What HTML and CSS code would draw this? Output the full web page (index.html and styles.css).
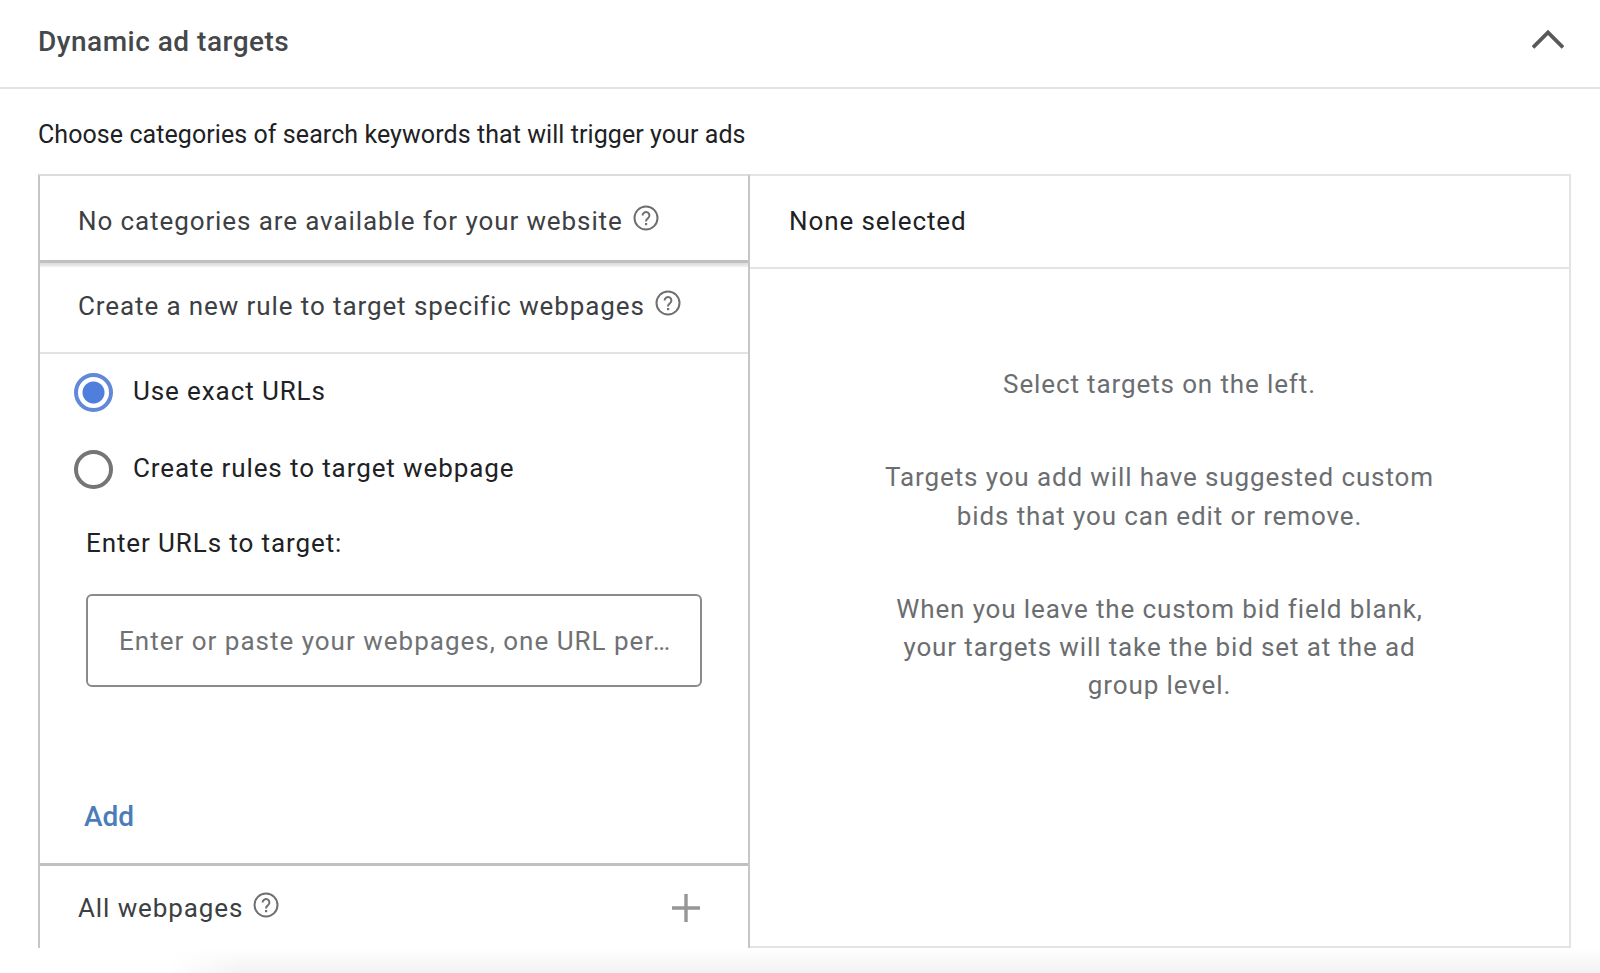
FILE: index.html
```html
<!DOCTYPE html>
<html lang="en">
<head>
<meta charset="utf-8">
<title>Dynamic ad targets</title>
<link rel="stylesheet" href="styles.css">
</head>
<body>
<main class="page">
  <header class="panel-header">
    <h1 class="panel-title">Dynamic ad targets</h1>
    <svg class="chevron" viewBox="0 0 32 20" width="32" height="20" aria-hidden="true"><path d="M1 18.5 16 3.5l15 15" fill="none" stroke="#595959" stroke-width="3.8"/></svg>
  </header>
  <p class="intro">Choose categories of search keywords that will trigger your ads</p>
  <section class="picker">
    <div class="left">
      <div class="row row-cats">
        <span class="row-text">No categories are available for your website</span>
        <svg class="help" viewBox="0 0 26 26" width="26" height="26" aria-hidden="true"><circle cx="13" cy="13" r="11.5" fill="none" stroke="#6f6f6f" stroke-width="2"/><path d="M9.6 10.4a3.4 3.4 0 1 1 5.4 2.8c-1.3 1-2 1.5-2 3.2" fill="none" stroke="#6f6f6f" stroke-width="2"/><path d="M12 18h2.2v2.2H12z" fill="#6f6f6f"/></svg>
      </div>
      <div class="row row-rule">
        <span class="row-text">Create a new rule to target specific webpages</span>
        <svg class="help" viewBox="0 0 26 26" width="26" height="26" aria-hidden="true"><circle cx="13" cy="13" r="11.5" fill="none" stroke="#6f6f6f" stroke-width="2"/><path d="M9.6 10.4a3.4 3.4 0 1 1 5.4 2.8c-1.3 1-2 1.5-2 3.2" fill="none" stroke="#6f6f6f" stroke-width="2"/><path d="M12 18h2.2v2.2H12z" fill="#6f6f6f"/></svg>
      </div>
      <div class="rule-body">
        <div class="radio-line radio-first"><span class="radio radio-on"></span><span class="radio-label">Use exact URLs</span></div>
        <div class="radio-line radio-second"><span class="radio"></span><span class="radio-label">Create rules to target webpage</span></div>
        <div class="url-label">Enter URLs to target:</div>
        <div class="url-input">Enter or paste your webpages, one URL per…</div>
        <div class="add">Add</div>
      </div>
      <div class="row row-all">
        <span class="row-text">All webpages</span>
        <svg class="help" viewBox="0 0 26 26" width="26" height="26" aria-hidden="true"><circle cx="13" cy="13" r="11.5" fill="none" stroke="#6f6f6f" stroke-width="2"/><path d="M9.6 10.4a3.4 3.4 0 1 1 5.4 2.8c-1.3 1-2 1.5-2 3.2" fill="none" stroke="#6f6f6f" stroke-width="2"/><path d="M12 18h2.2v2.2H12z" fill="#6f6f6f"/></svg>
        <svg class="plus" viewBox="0 0 28 28" width="28" height="28" aria-hidden="true"><path d="M14 0v28M0 14h28" fill="none" stroke="#969696" stroke-width="3.4"/></svg>
      </div>
    </div>
    <div class="right">
      <div class="selected">None selected</div>
      <div class="hints">
        <p class="hint">Select targets on the left.</p>
        <p class="hint">Targets you add will have suggested custom<br>bids that you can edit or remove.</p>
        <p class="hint">When you leave the custom bid field blank,<br>your targets will take the bid set at the ad<br>group level.</p>
      </div>
    </div>
  </section>
  <div class="fade"></div>
</main>
</body>
</html>
```
FILE: styles.css
```css
* { box-sizing: border-box; }
html, body { margin: 0; background: #fff; }
body { font-family: Roboto, "Liberation Sans", sans-serif; color: #202124; overflow: hidden; }
.page { width: 1600px; height: 973px; display: flex; flex-direction: column; overflow: hidden; }

.panel-header { height: 89px; flex: none; display: flex; align-items: center; justify-content: space-between; padding: 0 36px 4px 38px; border-bottom: 2px solid #e2e2e2; }
.panel-title { margin: 0; font-size: 28px; font-weight: 500; color: #45484b; letter-spacing: 0.5px; }
.chevron { display: block; margin-top: -6px; }

.intro { margin: 0; height: 85px; flex: none; padding-top: 29px; padding-left: 38px; font-size: 25px; line-height: 34px; letter-spacing: 0.07px; color: #202124; }

.picker { flex: none; height: 774px; margin: 0 29px 0 38px; display: grid; grid-template-columns: 712px 1fr; }

.left { border-left: 2px solid #c6c6c6; border-right: 2px solid #c6c6c6; border-top: 2px solid #dcdcdc; display: flex; flex-direction: column; overflow: hidden; }
.row { display: flex; align-items: center; padding-left: 38px; font-size: 26px; letter-spacing: 0.9px; color: #3c4043; }
.row-text { white-space: nowrap; }
.help { flex: none; margin-left: 10px; margin-top: -6px; }
.row-cats { height: 87px; flex: none; border-bottom: 3px solid #c0c0c0; padding-top: 5px; box-shadow: 0 2px 2px rgba(0,0,0,.08); position: relative; }
.row-rule { height: 91px; flex: none; border-top: 4px solid #efefef; border-bottom: 2px solid #e2e2e2; padding-bottom: 7px; }

.rule-body { flex: none; height: 512px; display: flex; flex-direction: column; border-bottom: 3px solid #c0c0c0; }
.radio-line { display: flex; align-items: center; height: 38px; padding-left: 34px; font-size: 26px; letter-spacing: 0.9px; color: #202124; }
.radio-first { margin-top: 19px; }
.radio-second { margin-top: 39px; }
.radio { width: 39px; height: 39px; border-radius: 50%; border: 4px solid #757575; flex: none; margin-right: 20px; background: #fff; }
.radio-on { border-color: #6189d8; background: radial-gradient(circle, #4f7edd 0 10.5px, #fff 11.5px); }
.radio-label { white-space: nowrap; margin-top: -3px; }
.url-label { margin: 38px 0 0 46px; height: 34px; font-size: 26px; line-height: 34px; letter-spacing: 0.9px; color: #202124; }
.url-input { margin: 34px 0 0 46px; width: 616px; height: 93px; border: 2px solid #8a8a8a; border-radius: 6px; padding-left: 31px; display: flex; align-items: center; font-size: 26px; letter-spacing: 1px; color: #6f7275; white-space: nowrap; }
.add { margin: 113px 0 0 44px; font-size: 28px; font-weight: 500; color: #4a7db9; }

.row-all { flex: 1; align-items: flex-start; padding-top: 27px; }
.row-all .help { margin-top: -1px; }
.plus { margin-left: auto; margin-right: 48px; margin-top: 1px; }

.right { border-top: 2px solid #e4e4e4; border-right: 2px solid #e4e4e4; border-bottom: 2px solid #e4e4e4; display: flex; flex-direction: column; }
.selected { height: 93px; flex: none; border-bottom: 2px solid #e4e4e4; padding-left: 39px; padding-bottom: 2px; display: flex; align-items: center; font-size: 26px; letter-spacing: 0.9px; color: #202124; }
.hints { padding-top: 96px; text-align: center; font-size: 26px; line-height: 38.3px; letter-spacing: 0.88px; color: #6b6e71; }
.hint { margin: 0 0 55px; }

.fade { flex: 1; background: linear-gradient(to right, #fff 170px, rgba(255,255,255,0) 240px), linear-gradient(to bottom, #fff, #f2f2f2); }
```
